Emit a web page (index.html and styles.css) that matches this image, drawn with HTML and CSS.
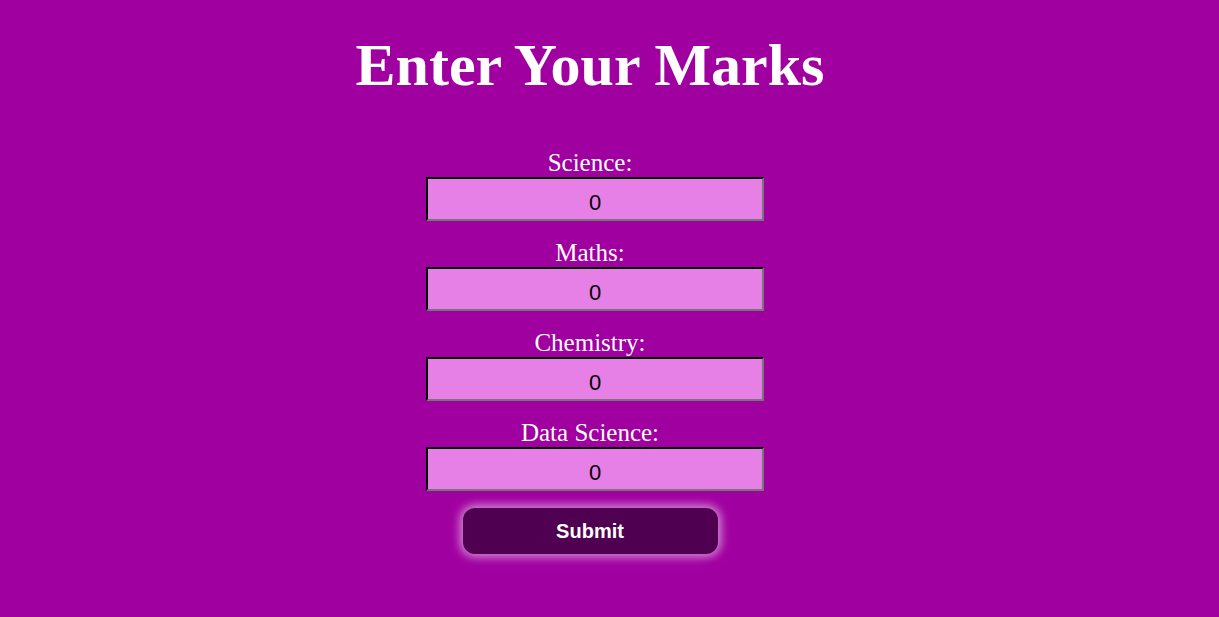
FILE: index.html
```html
<!DOCTYPE html>
<html>
<head>
<meta charset="utf-8">
<title>Enter Your Marks</title>
<link rel="stylesheet" href="styles.css">
</head>
<body>
<div class="page">
<h1 class="title">Enter Your Marks</h1>
<form class="marks-form">
  <div class="field">
    <label class="field-label" for="science">Science:</label>
    <input class="field-input" id="science" type="text" value="0">
  </div>
  <div class="field">
    <label class="field-label" for="maths">Maths:</label>
    <input class="field-input" id="maths" type="text" value="0">
  </div>
  <div class="field">
    <label class="field-label" for="chemistry">Chemistry:</label>
    <input class="field-input" id="chemistry" type="text" value="0">
  </div>
  <div class="field">
    <label class="field-label" for="ds">Data Science:</label>
    <input class="field-input" id="ds" type="text" value="0">
  </div>
  <button class="submit-btn" type="button">Submit</button>
</form>
</div>
</body>
</html>
```
FILE: styles.css
```css
html, body {
  margin: 0;
  padding: 0;
}
body {
  background: #a000a0;
  font-family: "Liberation Serif", "Times New Roman", serif;
  color: #ffffff;
  min-height: 617px;
}
.page {
  width: 1180px;
}
.title {
  margin: 0;
  padding-top: 30px;
  text-align: center;
  font-size: 60px;
  font-weight: bold;
  line-height: 70px;
}
.marks-form {
  display: flex;
  flex-direction: column;
  align-items: center;
  margin-top: 49px;
}
.field {
  display: flex;
  flex-direction: column;
  align-items: center;
  margin-bottom: 18px;
}
.field-label {
  font-size: 25px;
  line-height: 28px;
}
.field-input {
  box-sizing: border-box;
  width: 338px;
  height: 44px;
  margin-left: 10px;
  border: 2px inset #767676;
  border-top-color: #2a1a2a;
  border-left-color: #2a1a2a;
  background: #e680e6;
  font-family: "Liberation Sans", Arial, sans-serif;
  font-size: 22px;
  color: #000;
  text-align: center;
  padding: 8px 0 0 0;
}
.submit-btn {
  margin-top: -1px;
  width: 255px;
  height: 46px;
  border: none;
  border-radius: 12px;
  background: #500050;
  color: #fff;
  font-family: "Liberation Sans", Arial, sans-serif;
  font-size: 20px;
  font-weight: bold;
  box-shadow: 0 0 10px 3px rgba(255, 255, 255, 0.55);
  cursor: pointer;
}
```
